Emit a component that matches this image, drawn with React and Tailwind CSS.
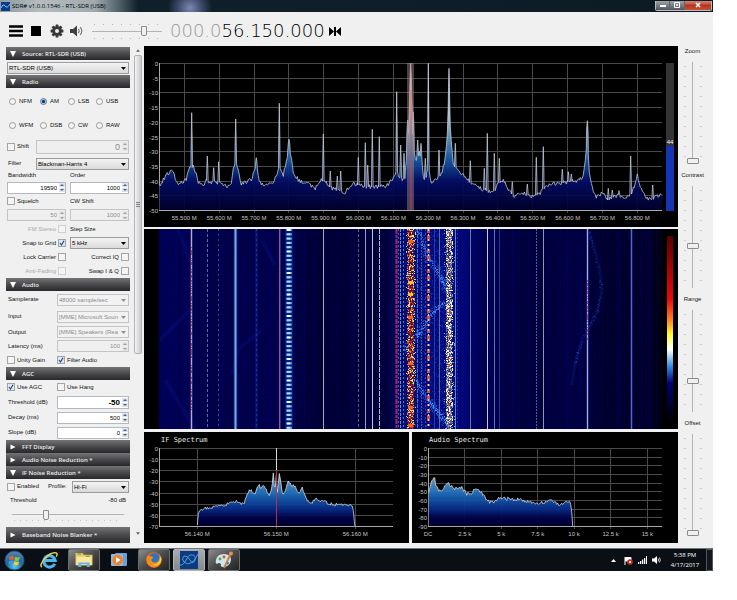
import React from "react";

/* ---------- helpers ---------- */

function makeRandom(seed) {
  let s = seed;
  return () => {
    s = (s * 1664525 + 1013904223) % 4294967296;
    return s / 4294967296;
  };
}

function interpolate(points, x) {
  for (let i = 1; i < points.length; i++) {
    if (x <= points[i][0]) {
      const [x0, y0] = points[i - 1];
      const [x1, y1] = points[i];
      return y0 + ((y1 - y0) * (x - x0)) / (x1 - x0 || 1);
    }
  }
  return points[points.length - 1][1];
}

function buildTrace(base, spikes, noise, seed) {
  const rnd = makeRandom(seed);
  const out = [];
  const end = base[base.length - 1][0];
  for (let x = base[0][0]; x <= end; x += 1) {
    if (spikes.some((s) => Math.abs(s[0] - x) < 0.8)) continue;
    out.push([x, interpolate(base, x) + (rnd() - 0.5) * noise]);
  }
  for (const [x, y] of spikes) {
    const floor = interpolate(base, x);
    out.push([x - 0.8, floor], [x - 0.5, y + (floor - y) * 0.5], [x, y], [x + 0.5, y + (floor - y) * 0.5], [x + 0.8, floor]);
  }
  out.sort((a, b) => a[0] - b[0]);
  return out.map((p) => p[0].toFixed(1) + "," + p[1].toFixed(1)).join(" ");
}

const scale = (ox, oy, pts) => pts.map(([x, y]) => [ox + x / 3, oy + y / 3]);

/* ---------- spectrum data ---------- */

const mainBase = [
  ...scale(140, 40, [[58, 437], [75, 412], [92, 390], [102, 395], [108, 425], [118, 432], [130, 425], [140, 415], [147, 385], [160, 380], [168, 400], [175, 425], [190, 438], [200, 420], [210, 428], [220, 422], [225, 430], [240, 425], [250, 438], [265, 440], [275, 425], [280, 385], [287, 370], [293, 380], [303, 430], [320, 425], [335, 418], [345, 385], [350, 370], [357, 425], [370, 435], [385, 435], [400, 425], [412, 400], [420, 380], [430, 405], [440, 360], [447, 312], [453, 350], [460, 395], [475, 420], [500, 430], [525, 445], [545, 420], [560, 430], [575, 445], [600, 450], [612, 465], [625, 445], [640, 430], [655, 435], [680, 440], [715, 440], [740, 438], [760, 415], [770, 395], [780, 410], [790, 425], [798, 390], [803, 280], [808, 210], [812, 130], [817, 210], [822, 330], [828, 362], [840, 325], [847, 380], [852, 425], [860, 400], [865, 370], [872, 425], [885, 425]]),
  ...scale(430, 40, [[0, 425], [20, 415], [35, 400], [45, 360], [50, 310], [57, 200], [63, 290], [70, 370], [80, 388], [100, 405], [125, 430], [150, 445], [190, 458], [205, 430], [220, 420], [235, 450], [255, 470], [275, 455], [290, 465], [310, 470], [330, 460], [345, 440], [365, 432], [390, 430], [420, 425], [450, 420], [460, 405], [466, 365], [472, 280], [478, 400], [490, 455], [500, 470], [517, 458], [535, 480], [550, 470], [567, 465], [580, 475], [598, 470], [608, 450], [622, 415], [635, 450], [650, 475], [665, 480], [680, 470], [697, 461]]),
];

const mainSpikes = [
  ...scale(140, 40, [[155, 218], [202, 348], [221, 383], [236, 365], [287, 237], [349, 353], [418, 190], [447, 298], [550, 282], [571, 393], [592, 408], [602, 393], [655, 352], [676, 308], [683, 375], [697, 268], [718, 290], [770, 155], [782, 315], [792, 340], [803, 240], [812, 70], [820, 215], [833, 300], [843, 310], [856, 355], [865, 70], [897, 330]]),
  ...scale(430, 40, [[27, 330], [57, 85], [76, 310], [121, 362], [163, 385], [172, 280], [193, 340], [208, 355], [247, 425], [292, 432], [319, 352], [340, 320], [397, 388], [415, 395], [424, 402], [472, 242], [535, 445], [547, 450], [567, 452], [602, 348], [622, 402], [668, 435]]),
];

const ifBase = scale(140, 425, [[172, 303], [176, 255], [210, 248], [250, 240], [290, 230], [312, 238], [322, 205], [333, 193], [342, 210], [357, 180], [364, 190], [371, 180], [388, 213], [395, 195], [400, 145], [405, 205], [408, 135], [412, 205], [418, 143], [428, 212], [446, 170], [455, 185], [460, 175], [475, 205], [487, 188], [503, 230], [515, 235], [525, 222], [550, 230], [580, 238], [610, 240], [638, 240], [645, 303]]);

const audioBase = scale(410, 425, [[56, 205], [62, 180], [72, 152], [78, 185], [85, 195], [95, 200], [105, 182], [112, 174], [122, 182], [132, 195], [150, 183], [170, 207], [185, 203], [198, 190], [215, 205], [230, 225], [250, 235], [265, 220], [300, 222], [340, 225], [370, 235], [400, 233], [430, 228], [452, 240], [465, 233], [480, 230], [484, 245], [488, 303]]);

function Axes({ x0, x1, y0, y1, rows, step, ticks }) {
  const rowList = Array.from({ length: rows + 1 }, (_, i) => i);
  return (
    <g>
      {rowList.map((i) => {
        const y = Math.round(y0 + ((y1 - y0) * i) / rows) + 0.5;
        return (
          <g key={i}>
            <line x1={x0} x2={x1} y1={y} y2={y} stroke={i === rows ? "#a8a8a8" : "#484a48"} />
            <text x={x0 - 1} y={y + 2} textAnchor="end" fill="#c4c4c4">{i === 0 ? "0" : "-" + i * step}</text>
          </g>
        );
      })}
      <line x1={x0 + 0.5} x2={x0 + 0.5} y1={y0} y2={y1} stroke="#a8a8a8" />
      {ticks.map(([x, label]) => (
        <g key={label}>
          {x > x0 + 1 && <line x1={Math.floor(x) + 0.5} x2={Math.floor(x) + 0.5} y1={y0} y2={y1 + 3} stroke="#484a48" />}
          <text x={x} y={y1 + 10} textAnchor="middle" fill="#c4c4c4">{label}</text>
        </g>
      ))}
    </g>
  );
}

const chartText = "block h-auto w-full bg-black font-['Liberation_Sans',Arial,sans-serif] text-[6px]";

function MainSpectrum() {
  const trace = buildTrace(mainBase, mainSpikes, 4, 7);
  const ticks = Array.from({ length: 14 }, (_, i) => [184.3 + i * 34.85, (55.5 + i * 0.1).toFixed(3) + " M"]);
  return (
    <svg viewBox="144 46 534 181" className={chartText} role="img" aria-label="RF spectrum">
      <defs>
        <linearGradient id="rf" gradientUnits="userSpaceOnUse" x1="0" x2="0" y1="63" y2="211">
          <stop offset="0" stopColor="#ffffff" />
          <stop offset="0.3" stopColor="#d4e4ee" />
          <stop offset="0.48" stopColor="#6fa4c8" />
          <stop offset="0.64" stopColor="#1a62ac" />
          <stop offset="0.8" stopColor="#020c66" />
          <stop offset="1" stopColor="#00002c" />
        </linearGradient>
      </defs>
      <Axes x0={159} x1={662} y0={63} y1={210} rows={10} step={5} ticks={ticks} />
      <polygon points={`159.3,210 ${trace} 662.3,210`} fill="url(#rf)" fillOpacity="0.93" />
      <polyline points={trace} fill="none" stroke="#c0c8d6" strokeWidth="0.8" strokeLinejoin="bevel" />
      <rect x="407" y="63" width="7" height="148" fill="#b08c8c" fillOpacity="0.45" />
      <line x1="411" x2="411" y1="90" y2="211" stroke="#e04040" strokeOpacity="0.65" />
      <line x1="159" x2="662" y1="210.5" y2="210.5" stroke="#a8a8a8" />
      <rect x="666" y="63" width="8" height="148" fill="#343434" />
      <rect x="666" y="146" width="8" height="65" fill="#1535b4" />
      <text x="670" y="144" textAnchor="middle" fill="#ffffff">44</text>
    </svg>
  );
}

/* ---------- waterfall ---------- */

function dots(rnd, count, x0, x1, y0 = 229, y1 = 429, w = 1) {
  let d = "";
  for (let i = 0; i < count; i++) {
    const x = Math.floor(x0 + rnd() * (x1 - x0));
    const y = Math.floor(y0 + rnd() * (y1 - y0)) + 0.5;
    d += `M${x} ${y}h${w}`;
  }
  return d;
}

function streak(rnd, pts, count, spread) {
  let d = "";
  for (let i = 0; i < count; i++) {
    const k = Math.floor(rnd() * (pts.length - 1));
    const t = rnd();
    const x = pts[k][0] + (pts[k + 1][0] - pts[k][0]) * t + (rnd() - 0.5) * spread;
    const y = pts[k][1] + (pts[k + 1][1] - pts[k][1]) * t + (rnd() - 0.5) * spread;
    d += `M${x.toFixed(0)} ${Math.floor(y) + 0.5}h1`;
  }
  return d;
}

const carriers = [
  [191.5, "#5a70c8", 3, "", 0.35], [191.5, "#dcb4c0", 1, "", 0.9],
  [207.5, "#5a86d8", 1, "3 2", 0.8], [218.5, "#4a66c0", 1, "2 3", 0.7],
  [235.5, "#1c46c0", 4, "", 0.45], [235.5, "#8cc4f4", 2, "", 0.85],
  [256.5, "#2c4cc0", 1, "2 3", 0.7], [256.5, "#1a2c90", 3, "", 0.35],
  [279.5, "#9a4c9e", 1, "", 1], [280.5, "#4858b0", 1, "", 0.5],
  [323.5, "#b4b8b0", 1, "", 0.95], [358.5, "#6674a8", 1, "3 2", 0.8],
  [365.5, "#a0a8b8", 1, "", 0.95], [372.5, "#c0c8cc", 1, "", 1], [379.5, "#c8ccd4", 1, "5 1", 0.9],
  [396.5, "#c02458", 2, "5 1 3 1", 0.95], [398.5, "#6c7cd0", 1, "2 2", 0.7], [400.5, "#7cb4e0", 1, "3 1", 0.8], [403.5, "#6c90d0", 1, "2 2", 0.8],
  [417.5, "#6c94e0", 1, "4 1", 0.7], [421.5, "#5878d0", 1, "2 1", 0.7], [425.5, "#3c58c0", 1, "2 2", 0.7],
  [428.5, "#d85840", 3, "4 2 6 3 2 3", 0.9], [428.5, "#f0e0d0", 1, "2 3", 0.9],
  [434.5, "#4058c0", 1, "", 0.6], [439.5, "#7080c0", 1, "", 0.8],
  [455.5, "#5a94e0", 1, "", 0.9], [457.5, "#2848b0", 1, "2 2", 0.6],
  [470.5, "#7884a0", 1, "", 0.9], [487.5, "#c8ccd0", 1, "", 1], [494.5, "#5c80d0", 1, "", 0.9], [499.5, "#3c58b0", 1, "", 0.6],
  [536.5, "#6a5ca0", 1, "2 1", 0.9], [543.5, "#98a0b4", 1, "", 0.95],
  [587.5, "#2440b0", 3, "", 0.5], [587.5, "#b0acd8", 1, "", 1],
  [631.5, "#1c30a0", 3, "", 0.5], [631.5, "#5478c8", 1, "", 0.9],
];

function Waterfall() {
  const rnd = makeRandom(42);
  const stripes = Array.from({ length: 150 }, () => {
    const x = 159 + Math.floor(rnd() * 500);
    return [x, rnd() > 0.5 ? "#0000a0" : "#000018", 0.08 + rnd() * 0.16];
  });
  const beads = Array.from({ length: 47 }, (_, i) => 229 + i * 4.3);
  const sweep = [[417, 229], [428, 258], [440, 276], [446, 290]];
  const back = [[445, 302], [430, 315], [418, 334], [404, 350]];
  const low = [[415, 380], [429, 402], [437, 412], [447, 424]];
  return (
    <svg viewBox="144 229 534 200" className="block h-auto w-full bg-black" role="img" aria-label="Waterfall">
      <defs>
        <linearGradient id="wf" x1="0" x2="1" y1="0" y2="0">
          <stop offset="0" stopColor="#000058" />
          <stop offset="0.12" stopColor="#00004a" />
          <stop offset="0.25" stopColor="#00004c" />
          <stop offset="0.31" stopColor="#000038" />
          <stop offset="0.45" stopColor="#00003a" />
          <stop offset="0.49" stopColor="#00107c" />
          <stop offset="0.6" stopColor="#00087c" />
          <stop offset="0.64" stopColor="#000054" />
          <stop offset="0.72" stopColor="#00003c" />
          <stop offset="0.83" stopColor="#000044" />
          <stop offset="0.88" stopColor="#00002e" />
          <stop offset="0.96" stopColor="#000030" />
          <stop offset="1" stopColor="#000010" />
        </linearGradient>
        <linearGradient id="scale" x1="0" x2="0" y1="0" y2="1">
          <stop offset="0" stopColor="#580000" />
          <stop offset="0.34" stopColor="#e80808" />
          <stop offset="0.45" stopColor="#ff8020" />
          <stop offset="0.53" stopColor="#ffff30" />
          <stop offset="0.61" stopColor="#ffffff" />
          <stop offset="0.7" stopColor="#3090e0" />
          <stop offset="0.79" stopColor="#000078" />
          <stop offset="1" stopColor="#000000" />
        </linearGradient>
      </defs>
      <rect x="159" y="229" width="504" height="200" fill="url(#wf)" />
      {stripes.map(([x, c, o], i) => <rect key={i} x={x} y="229" width="1" height="200" fill={c} fillOpacity={o} />)}
      <path d="M178 229L190 262M160 340L190 310M232 375L238 350L262 330M262 240L275 265M165 380L195 429" stroke="#0a1c90" strokeOpacity="0.25" strokeWidth="4" fill="none" />
      <path d="M588 229Q603 270 601 295Q598 315 585 335Q574 360 572 385" stroke="#0c2090" strokeOpacity="0.3" strokeWidth="3" fill="none" />
      <path d={dots(rnd, 2600, 159, 658)} stroke="#0000a0" strokeOpacity="0.3" />
      <path d={dots(rnd, 1800, 159, 658)} stroke="#000010" strokeOpacity="0.5" />
      <path d={dots(rnd, 700, 414, 446)} stroke="#2038c0" strokeOpacity="0.6" />
      <path d={streak(rnd, [[588, 229], [601, 280], [598, 310], [582, 340], [574, 365]], 120, 3)} stroke="#1c48b8" strokeOpacity="0.4" />
      {[sweep, back, low].map((s, i) => (
        <g key={i}>
          <path d={streak(rnd, s, 240, 7)} stroke="#1e5ce0" strokeOpacity="0.6" />
          <path d={streak(rnd, s, 80, 3)} stroke="#4cb0ff" strokeOpacity="0.6" />
        </g>
      ))}
      {carriers.map(([x, c, w, dash, o], i) => (
        <line key={i} x1={x} x2={x} y1="229" y2="429" stroke={c} strokeWidth={w} strokeDasharray={dash || undefined} strokeOpacity={o} />
      ))}
      <path d={dots(rnd, 110, 191, 192, 240, 410)} stroke="#b04058" />
      <path d={dots(rnd, 60, 587, 588, 280, 340)} stroke="#a040a0" />
      <rect x="285" y="229" width="8" height="200" fill="#1030a0" fillOpacity="0.5" />
      {beads.map((y, i) => (
        <g key={i}>
          <rect x="286" y={y} width="6" height="2" fill="#4c94e0" />
          <rect x="287" y={y} width="3.500" height="2" fill={i % 5 === 0 ? "#ffffff" : "#a8dcff"} />
        </g>
      ))}
      <rect x="408" y="229" width="6" height="200" fill="#801c20" fillOpacity="0.75" />
      <path d={dots(rnd, 520, 407, 414)} stroke="#d82818" />
      <path d={dots(rnd, 330, 407, 415)} stroke="#f08828" />
      <path d={dots(rnd, 170, 408, 414)} stroke="#ffe860" />
      <path d={dots(rnd, 170, 406, 416)} stroke="#b8d8ff" />
      <path d={dots(rnd, 300, 406, 416)} stroke="#081068" />
      {[243, 284, 296, 319, 365, 409, 427].map((y) => <rect key={y} x="408" y={y - 3} width="5" height="3" fill={y % 2 ? "#f06818" : "#ffc030"} />)}
      <rect x="446" y="229" width="6" height="200" fill="#6c6c90" fillOpacity="0.85" />
      <path d={dots(rnd, 720, 446, 453)} stroke="#f4f0ec" />
      <path d={dots(rnd, 220, 447, 452)} stroke="#f0b848" />
      <path d={dots(rnd, 100, 448, 451)} stroke="#c04820" />
      <path d={dots(rnd, 340, 446, 454)} stroke="#182070" />
      <path d={dots(rnd, 220, 444, 456)} stroke="#60a0f0" />
      <rect x="667" y="236" width="6" height="186" fill="url(#scale)" />
    </svg>
  );
}

function SmallGradient({ id }) {
  return (
    <linearGradient id={id} gradientUnits="userSpaceOnUse" x1="0" x2="0" y1="448" y2="526">
      <stop offset="0" stopColor="#f0f4f8" />
      <stop offset="0.3" stopColor="#b0c4d0" />
      <stop offset="0.45" stopColor="#4c90c4" />
      <stop offset="0.6" stopColor="#1c68b8" />
      <stop offset="0.78" stopColor="#082c88" />
      <stop offset="0.9" stopColor="#000048" />
      <stop offset="1" stopColor="#000030" />
    </linearGradient>
  );
}

const chartTitle = "font-['DejaVu_Sans_Mono','Liberation_Mono',monospace] text-[7px]";

function IfSpectrum() {
  const trace = buildTrace(ifBase, [], 3, 3);
  return (
    <svg viewBox="144 432 265 111" className={chartText} role="img" aria-label="IF spectrum">
      <defs><SmallGradient id="ifg" /></defs>
      <text x="161" y="442" fill="#e8e8e8" className={chartTitle}>IF Spectrum</text>
      <Axes x0={159} x1={393} y0={448} y1={526} rows={7} step={10} ticks={[[197.3, "56.140 M"], [276.3, "56.150 M"], [355.3, "56.160 M"]]} />
      <polygon points={`197.3,526 ${trace} 355,526`} fill="url(#ifg)" fillOpacity="0.95" />
      <polyline points={`${trace} 355,526`} fill="none" stroke="#d0dce6" strokeWidth="0.8" />
      <line x1="276.5" x2="276.5" y1="448" y2="470" stroke="#d8d8d8" />
      <line x1="276.5" x2="276.5" y1="470" y2="527" stroke="#b83048" />
      <line x1="159" x2="393" y1="526.5" y2="526.5" stroke="#a8a8a8" />
    </svg>
  );
}

function AudioSpectrum() {
  const trace = buildTrace(audioBase, [], 3.6, 11);
  return (
    <svg viewBox="412 432 266 111" className={chartText} role="img" aria-label="Audio spectrum">
      <defs><SmallGradient id="aug" /></defs>
      <text x="429" y="442" fill="#e8e8e8" className={chartTitle}>Audio Spectrum</text>
      <Axes x0={428} x1={662} y0={448} y1={526} rows={9} step={10} ticks={[[428, "DC"], [464.7, "2.5 k"], [501.3, "5 k"], [537.7, "7.5 k"], [574, "10 k"], [610.7, "12.5 k"], [647.3, "15 k"]]} />
      <polygon points={`428.7,526 ${trace} 572.7,526`} fill="url(#aug)" fillOpacity="0.95" />
      <polyline points={`${trace} 572.7,526`} fill="none" stroke="#d0dce6" strokeWidth="0.8" />
      <line x1="428" x2="662" y1="526.5" y2="526.5" stroke="#a8a8a8" />
    </svg>
  );
}

/* ---------- form controls ---------- */

function SectionHeader({ children, open = false, tall = false }) {
  return (
    <button type="button" className={`flex w-full items-center gap-[6px] bg-linear-to-b from-[#747476] via-[#4a4a4d] to-[#28282c] pl-1 text-left font-['Open_Sans','Noto_Sans',sans-serif] text-[6px] leading-[10px] font-semibold text-[#ececec] ${tall ? "h-4" : "h-[13px]"}`}>
      <svg viewBox="0 0 6 6" className="size-[6px] shrink-0" fill="#ffffff">
        {open ? <path d="M0 0H6L3 6Z" /> : <path d="M0.500 0.500L5.500 3L0.500 5.500Z" />}
      </svg>
      <span>{children}</span>
    </button>
  );
}

function Check({ label, checked = false, disabled = false, after = false }) {
  return (
    <label className={`flex items-center gap-[2px] ${after ? "flex-row-reverse justify-start" : ""} ${disabled ? "text-[#a8a8a8]" : ""}`}>
      <span className="relative flex">
        <input type="checkbox" defaultChecked={checked} disabled={disabled} className={`peer size-2 appearance-none border bg-[#f4f4f4] ${disabled ? "border-[#cfcfcf]" : "border-[#a4a4a4] checked:bg-[#dce8f4]"}`} />
        <svg viewBox="0 0 8 8" className="pointer-events-none absolute inset-0 hidden size-2 peer-checked:block" fill="none" stroke="#2c4480" strokeWidth="1.200"><path d="M2 4L3.500 6L6 1.800" /></svg>
      </span>
      <span>{label}</span>
    </label>
  );
}

function Spin({ label, value, disabled = false, size = "h-[12px] text-[6px]" }) {
  return (
    <span className={`flex min-w-0 flex-1 items-center border ${disabled ? "border-[#c4c4c4] bg-[#efefef] text-[#8c8c8c]" : "border-[#b4b8c0] bg-white text-black"} ${size}`}>
      <input type="text" aria-label={label} defaultValue={value} disabled={disabled} className="h-full w-0 min-w-0 flex-1 bg-transparent pr-[2px] text-right" />
      <span className="flex h-full w-[6px] flex-col justify-center gap-px">
        {["up", "down"].map((dir) => (
          <button key={dir} type="button" aria-label={`${label} ${dir}`} disabled={disabled} className={`flex h-1 items-center justify-center ${disabled ? "bg-[#e6e6e6]" : "bg-[#dce4f0]"}`}>
            <svg viewBox="0 0 4 2" className="h-[2px] w-1" fill={disabled ? "#a0a0a0" : "#50608c"}><path d={dir === "up" ? "M0 2L2 0L4 2Z" : "M0 0H4L2 2Z"} /></svg>
          </button>
        ))}
      </span>
    </span>
  );
}

function Drop({ label, value, disabled = false }) {
  return (
    <span className="relative flex min-w-0 flex-1">
      <select aria-label={label} disabled={disabled} className={`h-[12px] w-full appearance-none overflow-hidden border pr-2 pl-px text-[6px] leading-[10px] ${disabled ? "border-[#c4c4c4] bg-[#f2f2f2] text-[#8c8c8c] opacity-100" : "border-[#9c9c9c] bg-linear-to-b from-[#f4f4f4] to-[#dadada] text-black"}`}>
        <option>{value}</option>
      </select>
      <svg viewBox="0 0 5 3" className="pointer-events-none absolute top-[5px] right-[3px] h-[3px] w-[5px]" fill={disabled ? "#909090" : "#000000"}><path d="M0 0H5L2.500 3Z" /></svg>
    </span>
  );
}

function Row({ h, children, className = "" }) {
  return <div className={`flex items-center pl-px pr-px ${h} ${className}`}>{children}</div>;
}

function Mode({ name, checked = false }) {
  return (
    <label className="flex items-center gap-[3px]">
      <input type="radio" name="mode" defaultChecked={checked} className="size-[7px] shrink-0 appearance-none rounded-full border border-[#9a9a9a] bg-[#f4f4f4] checked:border-[#5a7898] checked:bg-[radial-gradient(circle,#103c70_0_35%,#b4d4ec_60%)]" />
      <span>{name}</span>
    </label>
  );
}

function Field({ h, label, children }) {
  return (
    <Row h={h}>
      <span className="w-[50px] shrink-0 pl-px whitespace-nowrap">{label}</span>
      {children}
    </Row>
  );
}

function Sidebar() {
  return (
    <form className="w-[124px] shrink-0 pt-px text-[6px] leading-[9px] text-[#101010]">
      <SectionHeader open>Source: RTL-SDR (USB)</SectionHeader>
      <Row h="h-[15px]"><Drop label="Source" value="RTL-SDR (USB)" /></Row>
      <SectionHeader open>Radio</SectionHeader>
      <div className="grid h-[49px] grid-cols-[31px_28px_28px_1fr] items-center pt-px pl-[3px]">
        <Mode name="NFM" /><Mode name="AM" checked /><Mode name="LSB" /><Mode name="USB" />
        <Mode name="WFM" /><Mode name="DSB" /><Mode name="CW" /><Mode name="RAW" />
      </div>
      <Row h="h-[19px]">
        <span className="w-[29px] shrink-0"><Check label="Shift" /></span>
        <Spin label="Shift" value="0" disabled size="h-[14px] text-[9px]" />
      </Row>
      <Row h="h-[15px]"><span className="w-[29px] shrink-0 pl-px">Filter</span><Drop label="Filter" value="Blackman-Harris 4" /></Row>
      <div className="grid grid-cols-[59px_1fr] gap-x-1 pl-px pr-px">
        <span className="h-[10px] pl-px">Bandwidth</span><span className="h-[10px]">Order</span>
        <span className="flex h-[13px] items-center"><Spin label="Bandwidth" value="19590" /></span>
        <span className="flex h-[13px] items-center"><Spin label="Order" value="1000" /></span>
        <span className="flex h-[14px] items-center"><Check label="Squelch" /></span>
        <span className="flex h-[14px] items-center">CW Shift</span>
        <span className="flex h-[14px] items-center"><Spin label="Squelch" value="50" disabled /></span>
        <span className="flex h-[14px] items-center"><Spin label="CW Shift" value="1000" disabled /></span>
        <span className="flex h-[14px] items-center justify-end"><Check label="FM Stereo" after disabled /></span>
        <span className="flex h-[14px] items-center">Step Size</span>
        <span className="flex h-[14px] items-center justify-end"><Check label="Snap to Grid" after checked /></span>
        <span className="flex h-[14px] items-center"><Drop label="Step Size" value="5 kHz" /></span>
        <span className="flex h-[14px] items-center justify-end"><Check label="Lock Carrier" after /></span>
        <span className="flex h-[14px] items-center justify-end"><Check label="Correct IQ" after /></span>
        <span className="flex h-[14px] items-center justify-end"><Check label="Anti-Fading" after disabled /></span>
        <span className="flex h-[14px] items-center justify-end"><Check label="Swap I &amp; Q" after /></span>
      </div>
      <SectionHeader open>Audio</SectionHeader>
      <Field h="h-[17px]" label="Samplerate"><Drop label="Samplerate" value="48000 sample/sec" disabled /></Field>
      <Field h="h-[17px]" label="Input"><Drop label="Input" value="[MME] Microsoft Soun" disabled /></Field>
      <Field h="h-[14px]" label="Output"><Drop label="Output" value="[MME] Speakers (Rea" disabled /></Field>
      <Field h="h-[14px]" label="Latency (ms)"><Spin label="Latency" value="100" disabled /></Field>
      <Row h="h-[14px]"><span className="w-[50px]"><Check label="Unity Gain" /></span><Check label="Filter Audio" checked /></Row>
      <SectionHeader open>AGC</SectionHeader>
      <Row h="h-[14px]"><span className="w-[50px]"><Check label="Use AGC" checked /></span><Check label="Use Hang" /></Row>
      <Field h="h-[16px]" label="Threshold (dB)"><Spin label="AGC threshold" value="-50" size="h-[13px] text-[8px] font-bold" /></Field>
      <Field h="h-[15px]" label="Decay (ms)"><Spin label="Decay" value="500" /></Field>
      <Field h="h-[15px]" label="Slope (dB)"><Spin label="Slope" value="0" /></Field>
      <SectionHeader>FFT Display</SectionHeader>
      <SectionHeader>Audio Noise Reduction *</SectionHeader>
      <SectionHeader open>IF Noise Reduction *</SectionHeader>
      <Row h="h-[15px]">
        <span className="w-[41px] shrink-0"><Check label="Enabled" /></span>
        <span className="w-[24px] shrink-0">Profile:</span>
        <Drop label="Profile" value="Hi-Fi" />
      </Row>
      <Row h="h-[13px]" className="justify-between"><label htmlFor="nr" className="pl-[3px]">Threshold</label><span className="pr-[3px]">-80 dB</span></Row>
      <div className="flex h-5 flex-col px-[6px] pt-[2px]">
        <input id="nr" type="range" min="0" max="100" defaultValue="29" className={hSlider} />
        <Ticks />
      </div>
      <SectionHeader tall>Baseband Noise Blanker *</SectionHeader>
    </form>
  );
}

const hSlider =
  "block h-[11px] w-full appearance-none bg-[linear-gradient(to_bottom,transparent_5px,#b4b4b4_5px,#b4b4b4_6px,transparent_6px)] [&::-webkit-slider-thumb]:h-[10px] [&::-webkit-slider-thumb]:w-[6px] [&::-webkit-slider-thumb]:appearance-none [&::-webkit-slider-thumb]:rounded-b-[2px] [&::-webkit-slider-thumb]:border [&::-webkit-slider-thumb]:border-[#8c8c8c] [&::-webkit-slider-thumb]:bg-[#f0f0f0]";

const vSlider =
  "block h-[102px] w-3 appearance-none bg-[linear-gradient(to_right,transparent_5px,#b4b4b4_5px,#b4b4b4_6px,transparent_6px)] [writing-mode:vertical-lr] [direction:rtl] [&::-webkit-slider-thumb]:h-[6px] [&::-webkit-slider-thumb]:w-3 [&::-webkit-slider-thumb]:appearance-none [&::-webkit-slider-thumb]:rounded-[1px] [&::-webkit-slider-thumb]:border [&::-webkit-slider-thumb]:border-[#8c8c8c] [&::-webkit-slider-thumb]:bg-[#f0f0f0]";

function Ticks({ wide = false }) {
  return <span className={`mx-[2px] block h-px ${wide ? "bg-[repeating-linear-gradient(to_right,#b8b8b8_0_1px,transparent_1px_9px)]" : "bg-[repeating-linear-gradient(to_right,#c0c0c0_0_1px,transparent_1px_6px)]"}`} />;
}

function VTicks() {
  return <span className="my-1 block w-[2px] self-stretch bg-[repeating-linear-gradient(to_bottom,#cccccc_0_1px,transparent_1px_10px)]" />;
}

function VerticalSlider({ id, label, value }) {
  return (
    <div className="flex h-[124px] flex-col items-center pr-[6px]">
      <label htmlFor={id} className="h-4 pt-px text-[6px] leading-[9px] text-[#181818]">{label}</label>
      <div className="flex gap-px">
        <VTicks />
        <input id={id} type="range" min="0" max="100" defaultValue={value} className={vSlider} />
        <VTicks />
      </div>
    </div>
  );
}

function Scrollbar() {
  return (
    <div className="ml-[3px] flex w-[9px] shrink-0 flex-col items-center bg-[#f0f0f0] pt-[3px]">
      <svg viewBox="0 0 5 3" className="h-[3px] w-[4px]" fill="#606060"><path d="M0 3H5L2.500 0Z" /></svg>
      <div className="mt-[3px] flex h-[299px] w-2 flex-col items-center justify-center gap-px rounded-[2px] border border-[#b4b4b8] bg-linear-to-r from-[#f4f4f4] to-[#c8c8cc]">
        <span className="h-px w-1 bg-[#808080]" /><span className="h-px w-1 bg-[#808080]" /><span className="h-px w-1 bg-[#808080]" />
      </div>
      <svg viewBox="0 0 5 3" className="mt-auto mb-2 h-[3px] w-[4px]" fill="#606060"><path d="M0 0H5L2.500 3Z" /></svg>
    </div>
  );
}

/* ---------- window chrome ---------- */

function TitleBar() {
  return (
    <header className="flex h-3 items-center bg-[radial-gradient(circle_at_190px_8px,#7c88b0_0,#3c4a6a_12px,transparent_22px),linear-gradient(to_right,#8c9aa2_0,#b4bcc0_40px,#a0aaae_95px,#54646c_118px,#10202a_138px,#0c1a24_100%)] pl-px">
      <svg viewBox="0 0 9 9" className="size-[9px]"><rect width="9" height="9" fill="#0c3c84" /><path d="M0 6Q2 1 4 4T9 2" fill="none" stroke="#7cc4ff" /></svg>
      <h1 className="ml-[2px] font-['Open_Sans','Noto_Sans',sans-serif] text-[6px] leading-[10px] whitespace-nowrap text-black">SDR# v1.0.0.1546 - RTL-SDR (USB)</h1>
      <div className="mr-px mb-px ml-auto flex h-[10px] overflow-hidden rounded-b-[2px] border border-t-0 border-[#b8bcc0]">
        <button type="button" aria-label="Minimize" className="flex w-[14px] items-center justify-center border-r border-[#60666c] bg-linear-to-b from-[#a0a4a8] to-[#50565c]">
          <svg viewBox="0 0 8 8" className="size-2"><rect x="1" y="4" width="6" height="2" fill="#ffffff" /></svg>
        </button>
        <button type="button" aria-label="Restore" className="flex w-[15px] items-center justify-center border-r border-[#60666c] bg-linear-to-b from-[#a0a4a8] to-[#50565c]">
          <svg viewBox="0 0 8 8" className="size-2" fill="none" stroke="#ffffff"><path d="M1.500 1.500H6.500V6.500H1.500ZM3.500 3.500H4.500V4.500H3.500Z" /></svg>
        </button>
        <button type="button" aria-label="Close" className="flex w-[26px] items-center justify-center bg-linear-to-b from-[#d08878] via-[#b83420] to-[#c85038]">
          <svg viewBox="0 0 8 8" className="size-2" stroke="#ffffff" strokeWidth="1.500"><path d="M2 2L6 6M6 2L2 6" /></svg>
        </button>
      </div>
    </header>
  );
}

function Toolbar() {
  return (
    <div className="flex h-[34px] items-center pt-[6px] pb-[2px] pl-[9px] text-black">
      <button type="button" aria-label="Menu"><svg viewBox="0 0 14 12" className="h-3 w-[14px]"><path d="M0 1.500H14M0 6H14M0 10.500H14" stroke="#000000" strokeWidth="2.600" /></svg></button>
      <button type="button" aria-label="Stop" className="ml-2 size-[10px] bg-black" />
      <button type="button" aria-label="Configure" className="ml-[9px]">
        <svg viewBox="-7 -7 14 14" className="size-[14px]">
          <g fill="#383838">
            {[0, 45, 90, 135].map((a) => <rect key={a} x="-1.400" y="-6.400" width="2.800" height="12.800" rx="0.500" transform={`rotate(${a})`} />)}
            <circle r="4.800" />
          </g>
          <circle r="2" fill="#f0f0f0" />
        </svg>
      </button>
      <button type="button" aria-label="Mute" className="ml-[6px]">
        <svg viewBox="0 0 14 12" className="h-3 w-[14px]">
          <path d="M0 4H3L7 0.500V11.500L3 8H0Z" fill="#404040" />
          <path d="M8.500 3.800Q10 6 8.500 8.200M10.500 2Q13.500 6 10.500 10" fill="none" stroke="#606060" />
        </svg>
      </button>
      <div className="ml-2 flex w-[70px] flex-col gap-px">
        <Ticks wide />
        <input aria-label="Volume" type="range" min="0" max="100" defaultValue="76" className={hSlider} />
        <Ticks wide />
      </div>
      <output aria-label="Frequency" className="ml-2 font-['DejaVu_Sans'] text-[18px] leading-5 font-extralight">
        <span className="text-[#989898]">000.0</span>56.150.000
      </output>
      <button type="button" aria-label="Center tuning" className="ml-1"><svg viewBox="0 0 12 9" className="h-[9px] w-3"><path d="M0 0L5 4.500L0 9ZM12 0L7 4.500L12 9ZM5 0H7V9H5Z" fill="#000000" /></svg></button>
    </div>
  );
}

/* ---------- taskbar ---------- */

function TaskButton({ label, kind = "plain", children }) {
  const look = {
    plain: "border-transparent",
    open: "border-[#6c6c6c] bg-linear-to-br from-[#8c8c8c] via-[#4a4a4a] to-[#222222]",
    active: "border-[#b4b4b4] bg-linear-to-b from-[#a8acb0] to-[#84888c]",
  }[kind];
  return <button type="button" aria-label={label} className={`flex h-full w-8 items-center justify-center rounded-[2px] border ${look}`}>{children}</button>;
}

function Taskbar() {
  return (
    <footer className="flex h-[23px] items-center gap-[3px] border-t border-[#707478] bg-[#0a0f16] text-white">
      <button type="button" aria-label="Start" className="ml-1">
        <svg viewBox="0 0 22 22" className="size-[21px]">
          <defs><radialGradient id="orb" cx="0.5" cy="0.8" r="0.8"><stop offset="0" stopColor="#50d0f0" /><stop offset="0.5" stopColor="#1c68a4" /><stop offset="1" stopColor="#5c88ac" /></radialGradient></defs>
          <circle cx="11" cy="11" r="10" fill="url(#orb)" stroke="#2c5070" />
          <path d="M6 7Q8 5.500 10.500 6.800L9.800 10.500Q7.500 9.500 5.300 10.600Z" fill="#f06030" />
          <path d="M11.500 7.200Q14 8.200 16.500 7L15.800 10.800Q13.300 12 10.800 11Z" fill="#8cc83c" />
          <path d="M5.200 11.500Q7.300 10.400 9.600 11.400L9 15Q6.800 14 4.600 15Z" fill="#3c9ce8" />
          <path d="M10.700 11.900Q13.200 13 15.600 11.700L15 15.400Q12.500 16.600 10 15.500Z" fill="#f8cc30" />
        </svg>
      </button>
      <span className="ml-[5px] flex">
        <TaskButton label="Internet Explorer">
          <svg viewBox="0 0 20 20" className="size-[19px]" fill="none">
            <path d="M15.500 13.500A6 6 0 1 1 16 10H5" stroke="#48b8f0" strokeWidth="3.200" />
            <path d="M2 17Q-1 15 5 8T17 2Q19 3 17 6" stroke="#f0d048" strokeWidth="1.500" />
          </svg>
        </TaskButton>
      </span>
      <TaskButton label="Explorer" kind="open">
        <svg viewBox="0 0 20 18" className="h-[17px] w-5"><path d="M1 1H8L10 3H19V14H1Z" fill="#e8c860" /><path d="M2 5H18V14H2Z" fill="#f8e8a4" /><path d="M3 2H7M12 4.500H16" stroke="#48a048" /><path d="M4 16V11H16V16H13V13H7V16Z" fill="#68b4e0" /></svg>
      </TaskButton>
      <TaskButton label="Media Player">
        <svg viewBox="0 0 16 14" className="h-[14px] w-4"><rect x="4" y="0" width="12" height="13" rx="1" fill="#6ca0cc" /><rect x="0" y="1" width="12" height="12" rx="1" fill="#90b8d8" /><circle cx="6.500" cy="7" r="5.200" fill="#f08030" /><path d="M5 4L9.500 7L5 10Z" fill="#ffffff" /></svg>
      </TaskButton>
      <TaskButton label="Firefox" kind="open">
        <svg viewBox="0 0 20 20" className="size-[18px]"><circle cx="10" cy="10" r="8.500" fill="#e86c14" /><circle cx="10.500" cy="8" r="5.800" fill="#2c74c0" /><path d="M2 6Q4 4 5 6Q9 5 9 8Q6 9 8 12Q11 14 15 11Q17 8 16 4Q20 9 17 14Q13 20 7 17.500Q0 14 2 6Z" fill="#f48c1c" /><path d="M17 6Q20 11 15 15Q11 17 8 15Q14 15 16 11Z" fill="#fcd040" /></svg>
      </TaskButton>
      <TaskButton label="SDR#" kind="active">
        <svg viewBox="0 0 18 18" className="size-[18px]"><rect width="18" height="18" fill="#0a3c84" /><path d="M0 14Q3 15 6 9T12 4Q16 4 15 9Q13 14 10 9T4 5Q1 8 4 11T11 12T18 3" fill="none" stroke="#5ca4dc" strokeWidth="0.900" /></svg>
      </TaskButton>
      <TaskButton label="Paint" kind="open">
        <svg viewBox="0 0 20 18" className="h-[18px] w-5"><path d="M2 9Q3 3 10 3T17 9Q16 16 9 16Q6 16 7 13Q5 11 3 13Q1 12 2 9Z" fill="#cfe4ec" /><circle cx="6" cy="8" r="1.400" fill="#48a848" /><circle cx="10" cy="6" r="1.400" fill="#e04838" /><circle cx="13.500" cy="12" r="1.500" fill="#3c7cd0" /><circle cx="14" cy="8" r="1.300" fill="#f0c030" /><path d="M10 17L17 2" stroke="#c88040" strokeWidth="1.800" /><circle cx="17" cy="2.500" r="2" fill="#e09050" /></svg>
      </TaskButton>
      <div className="ml-auto flex items-center gap-[5px]">
        <svg viewBox="0 0 5 3" className="h-[3px] w-[5px]" fill="#ffffff"><path d="M0 3H5L2.500 0Z" /></svg>
        <svg viewBox="0 0 9 9" className="ml-[3px] size-[9px]"><path d="M1 1V9M1.500 1.500H7V5H1.500Z" stroke="#ffffff" fill="#ffffff" /><circle cx="6" cy="6" r="2.800" fill="#d02c24" /><path d="M5 5L7 7M7 5L5 7" stroke="#ffffff" strokeWidth="0.800" /></svg>
        <svg viewBox="0 0 9 8" className="h-2 w-[9px]" fill="#ffffff"><path d="M0 6H1.300V8H0ZM2 5H3.300V8H2ZM4 3.500H5.300V8H4ZM6 2H7.300V8H6ZM8 0H9V8H8Z" /></svg>
        <svg viewBox="0 0 9 8" className="h-2 w-[9px]"><path d="M0 2.500H2L5 0V8L2 5.500H0Z" fill="#ffffff" /><path d="M6 2.500Q7 4 6 5.500M7.500 1.500Q9 4 7.500 6.500" stroke="#ffffff" strokeWidth="0.800" fill="none" /></svg>
        <time className="ml-[3px] w-[32px] text-center font-['Open_Sans','Noto_Sans',sans-serif] text-[6px] leading-[10px] whitespace-nowrap">5:38 PM<br />4/17/2017</time>
        <button type="button" aria-label="Show desktop" className="h-[22px] w-[7px] border border-[#50545c] bg-[#14181e]" />
      </div>
    </footer>
  );
}

export default function App() {
  return (
    <div className="min-h-screen bg-white font-['Liberation_Sans',Arial,sans-serif]">
      <div className="mr-6 bg-[#f0f0f0]">
        <TitleBar />
        <Toolbar />
        <main className="flex pb-[5px] pl-[6px]">
          <Sidebar />
          <Scrollbar />
          <div className="ml-[2px] flex min-w-0 flex-1 flex-col gap-[2px]">
            <MainSpectrum />
            <Waterfall />
            <div className="grid grid-cols-[265fr_266fr] gap-[3px] pt-px">
              <IfSpectrum />
              <AudioSpectrum />
            </div>
          </div>
          <aside className="w-[35px] shrink-0">
            <VerticalSlider id="zoom" label="Zoom" value="0" />
            <VerticalSlider id="contrast" label="Contrast" value="41" />
            <VerticalSlider id="range" label="Range" value="29" />
            <VerticalSlider id="offset" label="Offset" value="0" />
          </aside>
        </main>
        <Taskbar />
      </div>
    </div>
  );
}
